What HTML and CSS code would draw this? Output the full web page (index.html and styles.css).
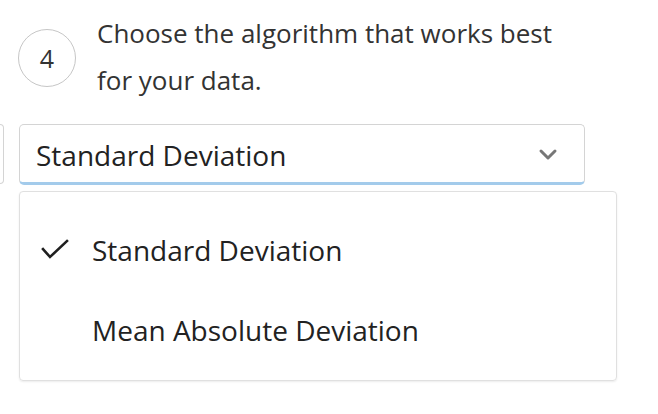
FILE: index.html
```html
<!DOCTYPE html>
<html>
<head>
<meta charset="utf-8">
<link rel="stylesheet" href="styles.css">
</head>
<body>
<div class="step">
  <div class="badge">4</div>
  <div class="prompt">Choose the algorithm that works best<br>for your data.</div>
</div>
<div class="select-row">
  <div class="stub"></div>
  <div class="select">
    <span class="select-value">Standard Deviation</span>
    <svg class="chevron" width="20" height="14" viewBox="0 0 20 14"><polyline points="3,3 10,10 17,3" fill="none" stroke="#777" stroke-width="3" stroke-linecap="round" stroke-linejoin="round"/></svg>
  </div>
</div>
<div class="menu">
  <div class="item">
    <svg class="check" width="30" height="24" viewBox="0 0 30 24"><polyline points="3,12 10,20 27,4" fill="none" stroke="#1f1f1f" stroke-width="2.6" stroke-linecap="square" stroke-linejoin="miter"/></svg>
    <span>Standard Deviation</span>
  </div>
  <div class="item">
    <span class="blank"></span>
    <span>Mean Absolute Deviation</span>
  </div>
</div>
</body>
</html>
```

FILE: styles.css
```css
html, body {
  margin: 0;
  padding: 0;
  background: #fff;
}
body {
  font-family: "Open Sans", "Noto Sans", sans-serif;
  color: #333;
  width: 658px;
  height: 414px;
  overflow: hidden;
}
.step {
  display: flex;
  align-items: center;
  padding: 10px 0 0 18px;
}
.badge {
  width: 56px;
  height: 56px;
  border: 1.5px solid #c6c6c6;
  border-radius: 50%;
  display: flex;
  align-items: center;
  justify-content: center;
  font-size: 25px;
  color: #333;
  flex: none;
  margin-top: 2px;
}
.prompt {
  margin-left: 21px;
  font-size: 26px;
  line-height: 47px;
  color: #333;
}
.select-row {
  display: flex;
  margin-top: 20px;
}
.stub {
  width: 3px;
  height: 58px;
  border: 1.5px solid #d4d4d4;
  border-left: none;
  border-radius: 0 4px 4px 0;
  margin-right: 15px;
}
.select {
  width: 522px;
  height: 57px;
  border: 1.5px solid #d4d4d4;
  border-bottom: 3px solid #a3cbeb;
  border-radius: 5px;
  display: flex;
  align-items: center;
  justify-content: space-between;
  padding: 0 26px 0 16px;
  box-sizing: content-box;
}
.select-value {
  font-size: 28px;
  color: #222;
  padding-top: 2px;
}
.chevron {
  display: block;
  margin-top: 2px;
}
.menu {
  margin: 6px 0 0 19px;
  width: 596px;
  height: 170px;
  border: 1px solid #e0e0e0;
  border-radius: 4px;
  box-shadow: 0 1px 2px rgba(0,0,0,0.08);
  padding-top: 18px;
  box-sizing: content-box;
}
.item {
  display: flex;
  align-items: center;
  height: 80px;
  padding-left: 20px;
  font-size: 28px;
  color: #222;
}
.check {
  display: block;
  width: 30px;
  margin-right: 22px;
  margin-top: -2px;
}
.blank {
  width: 30px;
  margin-right: 22px;
}
```
